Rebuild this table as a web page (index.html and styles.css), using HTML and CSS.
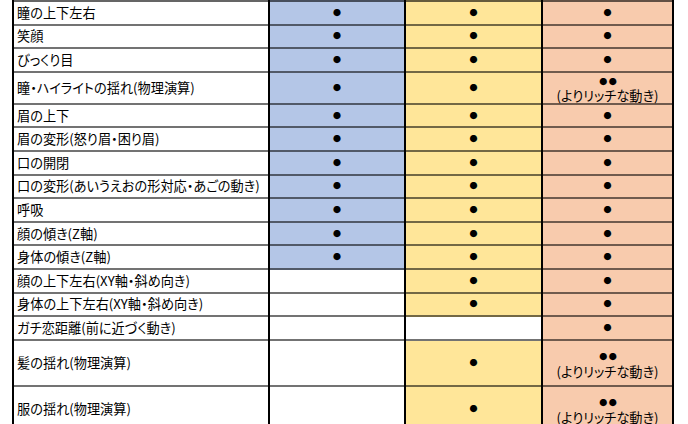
FILE: index.html
```html
<!DOCTYPE html>
<html lang="ja">
<head>
<meta charset="utf-8">
<link rel="stylesheet" href="styles.css">
</head>
<body>
<div class="sheet">
  <div class="row first"><div class="c label">瞳の上下左右</div><div class="c blue"><span class="dot">●</span></div><div class="c yellow"><span class="dot">●</span></div><div class="c orange"><span class="dot">●</span></div></div>
  <div class="row"><div class="c label">笑顔</div><div class="c blue"><span class="dot">●</span></div><div class="c yellow"><span class="dot">●</span></div><div class="c orange"><span class="dot">●</span></div></div>
  <div class="row"><div class="c label">びっくり目</div><div class="c blue"><span class="dot">●</span></div><div class="c yellow"><span class="dot">●</span></div><div class="c orange"><span class="dot">●</span></div></div>
  <div class="row mid"><div class="c label">瞳・ハイライトの揺れ(物理演算)</div><div class="c blue"><span class="dot">●</span></div><div class="c yellow"><span class="dot">●</span></div><div class="c orange double"><span class="pair"><span class="dot">●</span><span class="dot">●</span></span><span class="note">(よりリッチな動き)</span></div></div>
  <div class="row"><div class="c label">眉の上下</div><div class="c blue"><span class="dot">●</span></div><div class="c yellow"><span class="dot">●</span></div><div class="c orange"><span class="dot">●</span></div></div>
  <div class="row"><div class="c label">眉の変形(怒り眉・困り眉)</div><div class="c blue"><span class="dot">●</span></div><div class="c yellow"><span class="dot">●</span></div><div class="c orange"><span class="dot">●</span></div></div>
  <div class="row"><div class="c label">口の開閉</div><div class="c blue"><span class="dot">●</span></div><div class="c yellow"><span class="dot">●</span></div><div class="c orange"><span class="dot">●</span></div></div>
  <div class="row"><div class="c label">口の変形(あいうえおの形対応・あごの動き)</div><div class="c blue"><span class="dot">●</span></div><div class="c yellow"><span class="dot">●</span></div><div class="c orange"><span class="dot">●</span></div></div>
  <div class="row"><div class="c label">呼吸</div><div class="c blue"><span class="dot">●</span></div><div class="c yellow"><span class="dot">●</span></div><div class="c orange"><span class="dot">●</span></div></div>
  <div class="row"><div class="c label">顔の傾き(Z軸)</div><div class="c blue"><span class="dot">●</span></div><div class="c yellow"><span class="dot">●</span></div><div class="c orange"><span class="dot">●</span></div></div>
  <div class="row"><div class="c label">身体の傾き(Z軸)</div><div class="c blue"><span class="dot">●</span></div><div class="c yellow"><span class="dot">●</span></div><div class="c orange"><span class="dot">●</span></div></div>
  <div class="row"><div class="c label">顔の上下左右(XY軸・斜め向き)</div><div class="c"></div><div class="c yellow"><span class="dot">●</span></div><div class="c orange"><span class="dot">●</span></div></div>
  <div class="row"><div class="c label">身体の上下左右(XY軸・斜め向き)</div><div class="c"></div><div class="c yellow"><span class="dot">●</span></div><div class="c orange"><span class="dot">●</span></div></div>
  <div class="row"><div class="c label">ガチ恋距離(前に近づく動き)</div><div class="c"></div><div class="c"></div><div class="c orange"><span class="dot">●</span></div></div>
  <div class="row tall"><div class="c label">髪の揺れ(物理演算)</div><div class="c"></div><div class="c yellow"><span class="dot">●</span></div><div class="c orange double"><span class="pair"><span class="dot">●</span><span class="dot">●</span></span><span class="note">(よりリッチな動き)</span></div></div>
  <div class="row tall"><div class="c label">服の揺れ(物理演算)</div><div class="c"></div><div class="c yellow"><span class="dot">●</span></div><div class="c orange double"><span class="pair"><span class="dot">●</span><span class="dot">●</span></span><span class="note">(よりリッチな動き)</span></div></div>
</div>
</body>
</html>
```
FILE: styles.css
```css
html, body {
  margin: 0;
  padding: 0;
  background: #ffffff;
}
body {
  font-family: "Noto Sans CJK JP", "Noto Sans", sans-serif;
  font-size: 13.2px;
  font-feature-settings: "palt";
  color: #000;
  overflow: hidden;
  height: 424px;
}
.sheet {
  margin-left: 12px;
  width: 662px;
  background: #000;
  padding: 0 2px;
  box-sizing: border-box;
  display: flex;
  flex-direction: column;
}
.row {
  display: grid;
  grid-template-columns: 254px 134px 135px 129px;
  grid-template-rows: minmax(0, 1fr);
  column-gap: 2px;
  height: 23.6px;
  flex: none;
}
.row.first {
  height: 25.6px;
}
.row.first .c {
  border-top: 2px solid rgba(0, 0, 0, 0.6);
}
.row.mid {
  height: 32px;
}
.row.tall {
  height: 46px;
}
.c {
  background: #fff;
  border-bottom: 2px solid rgba(0, 0, 0, 0.55);
  box-sizing: border-box;
  min-height: 0;
  display: flex;
  align-items: center;
  justify-content: center;
  line-height: 16px;
  white-space: nowrap;
}
.c.label {
  justify-content: flex-start;
  padding-left: 3px;
}
.blue { background: #b4c6e7; }
.yellow { background: #ffe699; }
.orange { background: #f8cbad; }
.dot {
  font-size: 8px;
  line-height: 12px;
}
.double {
  flex-direction: column;
  padding-top: 4px;
}
.pair {
  display: flex;
  gap: 1.5px;
  height: 14px;
  align-items: center;
  padding-left: 1px;
}
.note {
  line-height: 16px;
}
```
